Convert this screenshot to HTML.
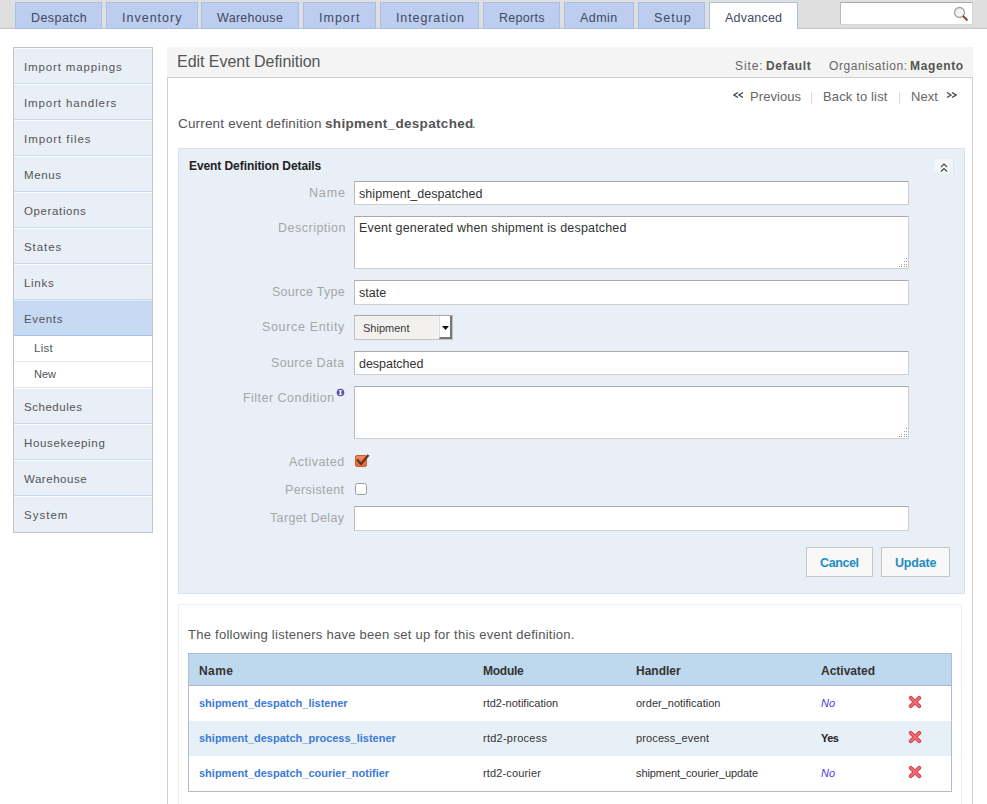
<!DOCTYPE html>
<html><head><meta charset="utf-8">
<style>
*{box-sizing:border-box;margin:0;padding:0}
html,body{width:987px;height:804px;overflow:hidden;background:#fff;font-family:"Liberation Sans",sans-serif;color:#555}
.a{position:absolute;white-space:nowrap}
#topbar{position:absolute;left:0;top:0;width:987px;height:29px;background:#dfdfdf;border-bottom:1px solid #c9c9c9;box-shadow:inset 0 -1px #d9d9d9}
.tab{position:absolute;top:2px;height:27px;background:#bdcdef;border:1px solid #a9c0e6}
.tab.act{background:#fff;height:27px;border-bottom:none}
.tt{position:absolute;top:11px;font-size:12.5px;line-height:14px;color:#3f4a5e;white-space:nowrap}
#search{position:absolute;left:840px;top:2px;width:133px;height:23px;background:#fff;border:1px solid #d6d6d6;border-top-color:#aaa;border-left-color:#b8b8b8}
#side{position:absolute;left:13px;top:47px;width:140px;height:486px;border:1px solid #c4c4c4;background:#e8eff6}
.si{position:absolute;left:0;width:138px;height:36px;border-bottom:1px solid #c9d9ee;box-shadow:inset 0 1px #fafcfd}
.st{position:absolute;left:24px;font-size:11.5px;line-height:12px;color:#555;white-space:nowrap}
.sub{position:absolute;left:0;width:138px;background:#fff;border-bottom:1px solid #e8e8e8}
#hdr{position:absolute;left:167px;top:47px;width:806px;height:31px;background:#f4f4f4;border-bottom:1px solid #d0d0d0}
#content{position:absolute;left:167px;top:77px;width:806px;height:740px;border-left:1px solid #d0d0d0;border-right:1px solid #d0d0d0}
.lbl{position:absolute;font-size:12.5px;line-height:14px;color:#a6a6a6;white-space:nowrap;text-align:right}
.inp{position:absolute;left:354px;width:555px;background:#fff;border:1px solid #cfcfcf;border-top-color:#a9a9a9;border-left-color:#bdbdbd}
.it{position:absolute;left:359px;font-size:12.5px;line-height:14px;color:#333;white-space:nowrap}
#fs{position:absolute;left:178px;top:148px;width:787px;height:446px;background:#e8eff6;border:1px solid #d8e3ec}
.btn{position:absolute;top:547px;height:30px;background:#f8f8f8;border:1px solid #c6c6c6}
.bt{position:absolute;top:556px;font-size:12.5px;line-height:14px;font-weight:bold;color:#1d8cc4;white-space:nowrap}
#lst{position:absolute;left:178px;top:604px;width:784px;height:220px;border:1px solid #ececec}
#tbl{position:absolute;left:188px;top:653px;width:764px;height:139px;border:1px solid #b4b9d2}
.th{position:absolute;font-weight:bold;font-size:12px;line-height:14px;color:#333;white-space:nowrap}
.td{position:absolute;font-size:11px;line-height:13px;color:#333;white-space:nowrap}
.lnk{color:#3b7bd6;font-weight:bold}
</style></head><body>
<div id="topbar"></div>
<div class="tab" style="left:15px;width:87px"></div>
<div class="tab" style="left:106px;width:92px"></div>
<div class="tab" style="left:201px;width:98px"></div>
<div class="tab" style="left:303px;width:73px"></div>
<div class="tab" style="left:380px;width:99px"></div>
<div class="tab" style="left:483px;width:77px"></div>
<div class="tab" style="left:564px;width:70px"></div>
<div class="tab" style="left:638px;width:67px"></div>
<div class="tab act" style="left:709px;width:89px"></div>
<div class="tt" style="left:31px;letter-spacing:0.43px">Despatch</div>
<div class="tt" style="left:122px;letter-spacing:1px">Inventory</div>
<div class="tt" style="left:217px;letter-spacing:0.3px">Warehouse</div>
<div class="tt" style="left:319px;letter-spacing:1px">Import</div>
<div class="tt" style="left:396px;letter-spacing:0.9px">Integration</div>
<div class="tt" style="left:499px;letter-spacing:0.27px">Reports</div>
<div class="tt" style="left:580px;letter-spacing:0.42px">Admin</div>
<div class="tt" style="left:654px;letter-spacing:1px">Setup</div>
<div class="tt" style="left:725px;letter-spacing:0.21px">Advanced</div>
<div id="search"></div>
<svg class="a" style="left:952px;top:6px" width="18" height="18" viewBox="0 0 18 18">
<circle cx="7.5" cy="6.5" r="5" fill="#eef4fa" stroke="#a9a48a" stroke-width="1.3"/>
<line x1="11" y1="10" x2="15.5" y2="14.5" stroke="#7a4a32" stroke-width="2"/>
</svg>

<div id="side">
<div class="si" style="top:0"></div>
<div class="si" style="top:36px"></div>
<div class="si" style="top:72px"></div>
<div class="si" style="top:108px"></div>
<div class="si" style="top:144px"></div>
<div class="si" style="top:180px"></div>
<div class="si" style="top:216px"></div>
<div class="si" style="top:252px;background:#c6daf4;border-bottom-color:#a9c3e6;box-shadow:inset 0 1px #e1ebf8"></div>
<div class="sub" style="top:288px;height:26px"></div>
<div class="sub" style="top:314px;height:26px"></div>
<div class="si" style="top:340px"></div>
<div class="si" style="top:376px"></div>
<div class="si" style="top:412px"></div>
<div class="si" style="top:448px;border-bottom:none"></div>
</div>
<div class="st" style="top:61px;letter-spacing:0.86px">Import mappings</div>
<div class="st" style="top:97px;letter-spacing:0.89px">Import handlers</div>
<div class="st" style="top:133px;letter-spacing:0.94px">Import files</div>
<div class="st" style="top:169px;letter-spacing:0.65px">Menus</div>
<div class="st" style="top:205px;letter-spacing:0.62px">Operations</div>
<div class="st" style="top:241px;letter-spacing:0.92px">States</div>
<div class="st" style="top:277px;letter-spacing:0.7px">Links</div>
<div class="st" style="top:313px;letter-spacing:0.66px">Events</div>
<div class="st" style="left:34px;top:342px;letter-spacing:0.27px">List</div>
<div class="st" style="left:34px;top:368px;font-size:11px">New</div>
<div class="st" style="top:401px;letter-spacing:0.54px">Schedules</div>
<div class="st" style="top:437px;letter-spacing:0.66px">Housekeeping</div>
<div class="st" style="top:473px;letter-spacing:0.52px">Warehouse</div>
<div class="st" style="top:509px;letter-spacing:1.02px">System</div>

<div id="hdr"></div>
<div id="content"></div>
<div class="a" style="left:177px;top:53px;font-size:16px;line-height:18px;color:#555;letter-spacing:-0.03px">Edit Event Definition</div>
<div class="a" style="left:735px;top:59px;font-size:12px;line-height:14px;color:#666"><span style="letter-spacing:0.9px">Site:</span></div>
<div class="a" style="left:766px;top:59px;font-size:12px;line-height:14px;color:#555;font-weight:bold;letter-spacing:0.7px">Default</div>
<div class="a" style="left:829px;top:59px;font-size:12px;line-height:14px;color:#666;letter-spacing:0.55px">Organisation:</div>
<div class="a" style="left:910px;top:59px;font-size:12px;line-height:14px;color:#555;font-weight:bold;letter-spacing:0.63px">Magento</div>

<svg class="a" style="left:733px;top:91px" width="11" height="8" viewBox="0 0 11 8"><polyline points="5,1.5 1,4 5,6.5" fill="none" stroke="#444" stroke-width="1.3"/><polyline points="10,1.5 6,4 10,6.5" fill="none" stroke="#444" stroke-width="1.3"/></svg>
<div class="a" style="left:750px;top:90px;font-size:13px;line-height:14px;color:#666;letter-spacing:0.07px">Previous</div>
<div class="a" style="left:811px;top:92px;width:1px;height:12px;background:#dcdcdc"></div>
<div class="a" style="left:823px;top:90px;font-size:13px;line-height:14px;color:#666;letter-spacing:0.14px">Back to list</div>
<div class="a" style="left:899px;top:92px;width:1px;height:12px;background:#dcdcdc"></div>
<div class="a" style="left:911px;top:90px;font-size:13px;line-height:14px;color:#666;letter-spacing:0.07px">Next</div>
<svg class="a" style="left:946px;top:91px" width="11" height="8" viewBox="0 0 11 8"><polyline points="1,1.5 5,4 1,6.5" fill="none" stroke="#444" stroke-width="1.3"/><polyline points="6,1.5 10,4 6,6.5" fill="none" stroke="#444" stroke-width="1.3"/></svg>

<div class="a" style="left:178px;top:117px;font-size:13.5px;line-height:14px;color:#555;letter-spacing:0.17px">Current event definition</div>
<div class="a" style="left:325px;top:117px;font-size:13.5px;line-height:14px;color:#555;font-weight:bold;letter-spacing:0.32px">shipment_despatched</div>
<div class="a" style="left:472px;top:117px;font-size:13px;line-height:14px;color:#555">.</div>

<div id="fs"></div>
<div class="a" style="left:189px;top:160px;font-size:12px;line-height:13px;font-weight:bold;color:#222;letter-spacing:-0.08px">Event Definition Details</div>
<div class="a" style="left:934px;top:159px;width:20px;height:14px;background:#f2f6f9;border-right:1px solid #dde5ec"></div>
<svg class="a" style="left:940px;top:162px" width="9" height="11" viewBox="0 0 9 11">
<polyline points="1,5 4,2 7,5" fill="none" stroke="#444" stroke-width="1.1"/>
<polyline points="1,9.5 4,6.5 7,9.5" fill="none" stroke="#444" stroke-width="1.1"/>
</svg>

<div class="lbl" style="left:309px;top:186px;letter-spacing:0.83px">Name</div>
<div class="inp" style="top:181px;height:24px"></div>
<div class="it" style="top:187px;letter-spacing:0.06px">shipment_despatched</div>
<div class="lbl" style="left:278px;top:221px;letter-spacing:0.5px">Description</div>
<div class="inp" style="top:216px;height:53px"></div>
<svg class="a" style="left:897px;top:257px" width="11" height="11" viewBox="0 0 11 11" fill="#999"><rect x="9" y="1" width="1" height="1"/><rect x="7" y="4" width="1" height="1"/><rect x="9" y="4" width="1" height="1"/><rect x="4" y="7" width="1" height="1"/><rect x="7" y="7" width="1" height="1"/><rect x="9" y="7" width="1" height="1"/><rect x="2" y="9" width="1" height="1"/><rect x="4" y="9" width="1" height="1"/><rect x="7" y="9" width="1" height="1"/><rect x="9" y="9" width="1" height="1"/></svg>
<div class="it" style="top:221px;letter-spacing:0.18px">Event generated when shipment is despatched</div>
<div class="lbl" style="left:272px;top:285px;letter-spacing:0.28px">Source Type</div>
<div class="inp" style="top:280px;height:25px"></div>
<div class="it" style="top:286px;">state</div>
<div class="lbl" style="left:262px;top:320px;letter-spacing:0.66px">Source Entity</div>
<div class="a" style="left:354px;top:315px;width:99px;height:25px;background:#f2f1f0;border:1px solid #c2c2c2;border-top-color:#a8a8a8"></div>
<div class="a" style="left:439px;top:316px;width:13px;height:23px;background:#fff;border-right:2px solid #777;border-bottom:2px solid #777;border-left:1px solid #ddd"></div>
<svg class="a" style="left:442px;top:326px" width="7" height="5" viewBox="0 0 7 5"><polygon points="0,0 7,0 3.5,4" fill="#111"/></svg>
<div class="a" style="left:363px;top:322px;font-size:11px;line-height:13px;color:#3a3a3a">Shipment</div>
<div class="lbl" style="left:271px;top:356px;letter-spacing:0.36px">Source Data</div>
<div class="inp" style="top:351px;height:24px"></div>
<div class="it" style="top:357px;letter-spacing:-0.03px">despatched</div>
<div class="lbl" style="left:243px;top:391px;letter-spacing:0.47px">Filter Condition</div>
<svg class="a" style="left:336px;top:388px" width="9" height="9" viewBox="0 0 9 9"><circle cx="4.5" cy="4.5" r="3.8" fill="#5b4ea6"/><rect x="3.8" y="2.6" width="1.4" height="3.8" fill="#fff"/><rect x="2.8" y="2.3" width="3.4" height="0.9" fill="#fff"/><rect x="2.8" y="5.8" width="3.4" height="0.9" fill="#fff"/></svg>
<div class="inp" style="top:386px;height:53px"></div>
<svg class="a" style="left:897px;top:427px" width="11" height="11" viewBox="0 0 11 11" fill="#999"><rect x="9" y="1" width="1" height="1"/><rect x="7" y="4" width="1" height="1"/><rect x="9" y="4" width="1" height="1"/><rect x="4" y="7" width="1" height="1"/><rect x="7" y="7" width="1" height="1"/><rect x="9" y="7" width="1" height="1"/><rect x="2" y="9" width="1" height="1"/><rect x="4" y="9" width="1" height="1"/><rect x="7" y="9" width="1" height="1"/><rect x="9" y="9" width="1" height="1"/></svg>
<div class="lbl" style="left:289px;top:455px;letter-spacing:0.47px">Activated</div>
<div class="a" style="left:355px;top:455px;width:12px;height:12px;background:linear-gradient(#f3895a,#e8683a);border:1px solid #c9602f;border-radius:2px"></div>
<svg class="a" style="left:355px;top:453px" width="15" height="14" viewBox="0 0 15 14"><polyline points="2,6.5 6,11 13.5,2" fill="none" stroke="#6a3326" stroke-width="2.4" stroke-linejoin="round"/></svg>
<div class="lbl" style="left:285px;top:483px;letter-spacing:0.39px">Persistent</div>
<div class="a" style="left:355px;top:483px;width:12px;height:12px;background:#fff;border:1px solid #a39d95;border-radius:2.5px"></div>
<div class="lbl" style="left:270px;top:511px;letter-spacing:0.35px">Target Delay</div>
<div class="inp" style="top:506px;height:25px"></div>

<div class="btn" style="left:806px;width:67px"></div>
<div class="btn" style="left:881px;width:69px"></div>
<div class="bt" style="left:820px;letter-spacing:-0.4px">Cancel</div>
<div class="bt" style="left:895px;letter-spacing:-0.2px">Update</div>

<div id="lst"></div>
<div class="a" style="left:188px;top:628px;font-size:13px;line-height:14px;color:#555;letter-spacing:0.26px">The following listeners have been set up for this event definition.</div>
<div id="tbl">
<div class="a" style="left:0;top:0;width:762px;height:32px;background:#bed8ee;border-bottom:1px solid #a9b3cf"></div>
<div class="a" style="left:0;top:67px;width:762px;height:35px;background:#e8f0f7"></div>
</div>
<div class="th" style="left:199px;top:664px;letter-spacing:0.4px">Name</div>
<div class="th" style="left:483px;top:664px;letter-spacing:-0.26px">Module</div>
<div class="th" style="left:636px;top:664px">Handler</div>
<div class="th" style="left:821px;top:664px">Activated</div>

<div class="td lnk" style="left:199px;top:697px">shipment_despatch_listener</div>
<div class="td" style="left:483px;top:697px">rtd2-notification</div>
<div class="td" style="left:636px;top:697px">order_notification</div>
<div class="td" style="left:821px;top:697px;color:#4a3cf0;font-style:italic">No</div>

<div class="td lnk" style="left:199px;top:732px">shipment_despatch_process_listener</div>
<div class="td" style="left:483px;top:732px;letter-spacing:0.25px">rtd2-process</div>
<div class="td" style="left:636px;top:732px;letter-spacing:0.12px">process_event</div>
<div class="td" style="left:821px;top:732px;font-weight:bold;color:#222;letter-spacing:-0.5px">Yes</div>

<div class="td lnk" style="left:199px;top:767px">shipment_despatch_courier_notifier</div>
<div class="td" style="left:483px;top:767px;letter-spacing:0.15px">rtd2-courier</div>
<div class="td" style="left:636px;top:767px;letter-spacing:-0.09px">shipment_courier_update</div>
<div class="td" style="left:821px;top:767px;color:#4a3cf0;font-style:italic">No</div>

<svg class="a" style="left:908px;top:695px" width="14" height="14" viewBox="0 0 14 14"><path d="M2.8,2.8 L11.2,11.2 M11.2,2.8 L2.8,11.2" stroke="#cf3d48" stroke-width="4" stroke-linecap="round"/><path d="M2.8,2.8 L11.2,11.2 M11.2,2.8 L2.8,11.2" stroke="#f06b72" stroke-width="2.2" stroke-linecap="round"/></svg>
<svg class="a" style="left:908px;top:730px" width="14" height="14" viewBox="0 0 14 14"><path d="M2.8,2.8 L11.2,11.2 M11.2,2.8 L2.8,11.2" stroke="#cf3d48" stroke-width="4" stroke-linecap="round"/><path d="M2.8,2.8 L11.2,11.2 M11.2,2.8 L2.8,11.2" stroke="#f06b72" stroke-width="2.2" stroke-linecap="round"/></svg>
<svg class="a" style="left:908px;top:765px" width="14" height="14" viewBox="0 0 14 14"><path d="M2.8,2.8 L11.2,11.2 M11.2,2.8 L2.8,11.2" stroke="#cf3d48" stroke-width="4" stroke-linecap="round"/><path d="M2.8,2.8 L11.2,11.2 M11.2,2.8 L2.8,11.2" stroke="#f06b72" stroke-width="2.2" stroke-linecap="round"/></svg>
</body></html>
